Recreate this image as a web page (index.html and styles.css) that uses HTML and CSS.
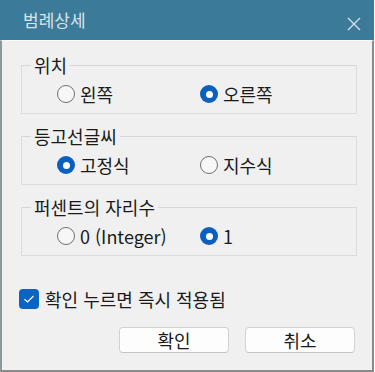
FILE: index.html
```html
<!DOCTYPE html>
<html lang="ko">
<head>
    <meta charset="UTF-8">
    <meta name="viewport" content="width=device-width, initial-scale=1.0">
    <title>범례상세</title>
    <link rel="stylesheet" href="styles.css">
</head>
<body>
    <div class="window">
        <div class="titlebar">
            <span class="title">범례상세</span>
            <svg class="close" width="14" height="14" viewBox="0 0 14 14">
                <path d="M1 1 L13 13 M13 1 L1 13" stroke="#d3dfe6" stroke-width="1.4" fill="none"/>
            </svg>
        </div>
        <div class="content">
            <fieldset class="group">
                <legend>위치</legend>
                <div class="options">
                    <label class="radio"><span class="dot"></span>왼쪽</label>
                    <label class="radio"><span class="dot checked"></span>오른쪽</label>
                </div>
            </fieldset>
            <fieldset class="group">
                <legend>등고선글씨</legend>
                <div class="options">
                    <label class="radio"><span class="dot checked"></span>고정식</label>
                    <label class="radio"><span class="dot"></span>지수식</label>
                </div>
            </fieldset>
            <fieldset class="group">
                <legend>퍼센트의 자리수</legend>
                <div class="options">
                    <label class="radio"><span class="dot"></span>0 (Integer)</label>
                    <label class="radio"><span class="dot checked"></span>1</label>
                </div>
            </fieldset>
            <label class="check">
                <span class="box">
                    <svg width="12" height="10" viewBox="0 0 12 10">
                        <path d="M1.5 5.2 L4.5 8 L10.5 2" stroke="#fff" stroke-width="1.2" fill="none"/>
                    </svg>
                </span>
                확인 누르면 즉시 적용됨
            </label>
            <div class="buttons">
                <button>확인</button>
                <button>취소</button>
            </div>
        </div>
    </div>
</body>
</html>
```

FILE: styles.css
```css
html {
    background: #fff;
}
body {
    margin: 0;
    font-family: "Noto Sans CJK KR", "Noto Sans", sans-serif;
    color: #1a1a1a;
}
.window {
    width: 374px;
    height: 372px;
    display: flex;
    flex-direction: column;
}
.titlebar {
    height: 40px;
    flex-shrink: 0;
    background-color: #3b7b99;
    display: flex;
    align-items: center;
    justify-content: space-between;
    padding: 0 13px 0 23px;
}
.title {
    font-size: 17px;
    color: #d9e3e9;
    line-height: 20px;
}
.close {
    margin-top: 7px;
}
.content {
    flex-grow: 1;
    background-color: #f0f0f0;
    border-top: 1px solid #fafafa;
    border-left: 2px solid #8e979c;
    border-right: 2px solid #8a8a8a;
    border-bottom: 2px solid #8a8a8a;
    padding: 14px 15px 0 17px;
    display: flex;
    flex-direction: column;
    font-size: 18px;
}
.group {
    margin: 0 0 12px 2px;
    padding: 0;
    border: 1px solid #dcdcdc;
    border-top-color: #d8d8d8;
}
.group legend {
    padding: 0 3px;
    margin-left: 9px;
    line-height: 20px;
}
.options {
    height: 38px;
    padding-left: 35px;
    display: grid;
    grid-template-columns: 143px auto;
    align-items: center;
    line-height: 20px;
}
.radio {
    display: flex;
    align-items: center;
    gap: 5px;
}
.dot {
    width: 16px;
    height: 16px;
    border: 1.5px solid #707070;
    border-radius: 50%;
    background: #f7f7f7;
    box-sizing: content-box;
    position: relative;
}
.dot.checked {
    width: 18px;
    height: 18px;
    border: none;
    background: #0a5fbf;
}
.dot.checked::after {
    content: "";
    position: absolute;
    left: 5.5px;
    top: 5.5px;
    width: 7px;
    height: 7px;
    border-radius: 50%;
    background: #fff;
}
.check {
    margin-top: 19px;
    display: flex;
    align-items: center;
    gap: 6px;
    line-height: 24px;
}
.box {
    width: 20px;
    height: 20px;
    border-radius: 4px;
    background: #0b63c4;
    display: flex;
    align-items: center;
    justify-content: center;
}
.buttons {
    margin-top: 16px;
    margin-right: 2px;
    display: flex;
    justify-content: flex-end;
    gap: 16px;
}
button {
    width: 110px;
    height: 26px;
    background: #fdfdfd;
    border: 1px solid #d3d3d3;
    border-bottom-color: #c4c4c4;
    border-radius: 4px;
    font-family: inherit;
    font-size: 18px;
    line-height: 22px;
    color: #1a1a1a;
    padding: 0;
}
```
